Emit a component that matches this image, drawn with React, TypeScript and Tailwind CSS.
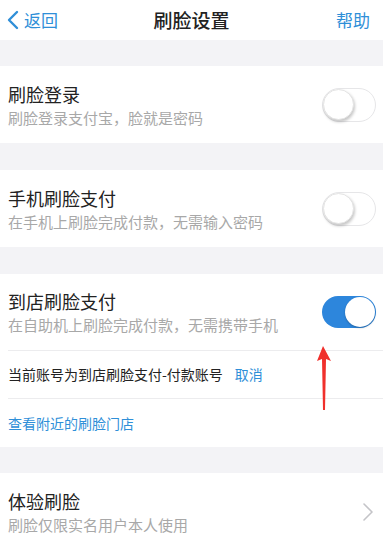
import React from "react";

const font = { fontFamily: '"Noto Sans CJK SC", "Noto Sans", sans-serif' };

function Toggle({ on }: { on: boolean }) {
  return on ? (
    <div className="relative w-[54px] h-[32px] rounded-full bg-[#2d86dc] shrink-0">
      <div className="absolute right-[1px] top-[1px] w-[30px] h-[30px] rounded-full bg-white shadow-[0_1px_2px_rgba(0,0,0,0.25)]" />
    </div>
  ) : (
    <div className="relative w-[54px] h-[34px] rounded-full bg-white border-[1.5px] border-[#e6e6e8] shrink-0">
      <div className="absolute left-[0px] top-[0px] w-[31px] h-[31px] rounded-full bg-white shadow-[1px_2px_3px_rgba(0,0,0,0.22)] border border-[#e4e4e4]" />
    </div>
  );
}

function Row({ title, sub, right, h = "h-[77px]" }: { title: string; sub: string; right: React.ReactNode; h?: string }) {
  return (
    <div className={`flex items-center justify-between bg-white pl-[8px] pr-[7px] ${h}`}>
      <div className="flex flex-col">
        <div className="text-[18px] leading-[24px] text-[#222]">{title}</div>
        <div className="text-[15px] leading-[20px] text-[#a8a8a8] mt-[2px]">{sub}</div>
      </div>
      {right}
    </div>
  );
}

export default function App() {
  return (
    <div className="w-[383px] h-[538px] overflow-hidden bg-[#f3f3f6] relative" style={font}>
      {/* Nav */}
      <div className="h-[40px] bg-white flex items-center justify-between px-[7px]">
        <div className="flex items-center text-[#2f8fd8] w-[80px]">
          <svg width="12" height="20" viewBox="0 0 12 20" className="mr-[5px]">
            <path d="M10 2 L2 10 L10 18" fill="none" stroke="#2f8fd8" strokeWidth="2.4" strokeLinecap="round" strokeLinejoin="round" />
          </svg>
          <span className="text-[17px]">返回</span>
        </div>
        <div className="text-[19px] text-[#222] font-medium">刷脸设置</div>
        <div className="w-[80px] flex justify-end pr-[6px] text-[17px] text-[#2f8fd8]">帮助</div>
      </div>
      <div className="h-[26px]" />
      <Row title="刷脸登录" sub="刷脸登录支付宝，脸就是密码" right={<Toggle on={false} />} />
      <div className="h-[27px]" />
      <Row title="手机刷脸支付" sub="在手机上刷脸完成付款，无需输入密码" right={<Toggle on={false} />} />
      <div className="h-[27px]" />
      <div className="bg-white">
        <Row title="到店刷脸支付" sub="在自助机上刷脸完成付款，无需携带手机" right={<Toggle on={true} />} h="h-[76px]" />
        <div className="ml-[8px] border-t border-[#ececee]" />
        <div className="h-[47px] flex items-center pl-[8px] text-[14px]">
          <span className="text-[#222]">当前账号为到店刷脸支付-付款账号</span>
          <span className="ml-[12px] text-[#2f8fd8]">取消</span>
        </div>
        <div className="ml-[8px] border-t border-[#ececee]" />
        <div className="h-[48px] flex items-center pl-[8px] text-[14px] text-[#2f8fd8]">查看附近的刷脸门店</div>
      </div>
      <div className="h-[26px]" />
      <Row
        title="体验刷脸"
        sub="刷脸仅限实名用户本人使用"
        right={
          <svg width="12" height="20" viewBox="0 0 12 20" className="mr-[2px]">
            <path d="M2 2 L10 10 L2 18" fill="none" stroke="#c4c4c8" strokeWidth="1.6" strokeLinecap="round" strokeLinejoin="round" />
          </svg>
        }
      />
      {/* red arrow annotation */}
      <svg className="absolute left-[314px] top-[344px]" width="20" height="68" viewBox="0 0 20 68">
        <polygon points="9,2 3,17 8,15 9,66 11,66 12,15 17,17" fill="#f0302c" />
      </svg>
    </div>
  );
}
